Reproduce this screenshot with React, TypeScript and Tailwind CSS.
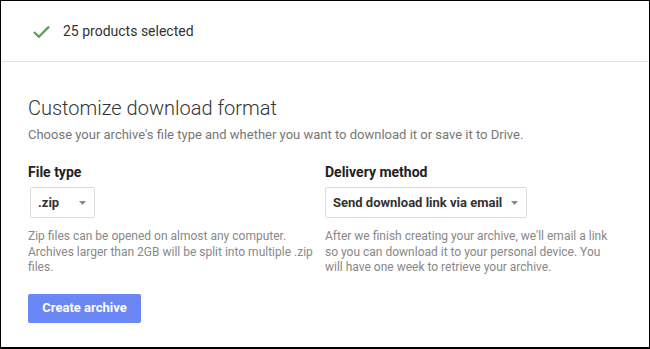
import React from "react";

function Caret() {
  return (
    <svg width="7" height="4" viewBox="0 0 7 4" className="shrink-0">
      <path d="M0 0 L7 0 L3.5 4 Z" fill="#888" />
    </svg>
  );
}

function SelectBox({ value, className }: { value: string; className: string }) {
  return (
    <div
      className={`flex h-[31px] items-center justify-between rounded-[2px] border border-[#dcdcdc] bg-white pl-[7px] pr-[8px] text-[13px] font-bold text-[#333] ${className}`}
    >
      <span>{value}</span>
      <Caret />
    </div>
  );
}

export default function App() {
  return (
    <div
      className="h-[349px] w-[650px] overflow-hidden border-t border-l border-r border-b-2 border-black bg-white"
      style={{ fontFamily: "Roboto, 'Liberation Sans', sans-serif" }}
    >
      {/* Selected header */}
      <div className="flex h-[61px] items-center gap-[13px] border-b border-[#e3e3e3] pl-[32px]">
        <svg width="17" height="13" viewBox="0 0 17 13">
          <path d="M1 7 L5.8 11.8 L16 1.6" fill="none" stroke="#5aa05a" strokeWidth="2.2" />
        </svg>
        <span className="text-[14px] text-[#333]">25 products selected</span>
      </div>

      {/* Format options */}
      <div className="pl-[27px] pt-[33px]">
        <h1 className="text-[20px] font-light leading-[26px] text-[#333]">Customize download format</h1>
        <p className="mt-[6px] text-[13px] leading-[16px] text-[#777]">
          Choose your archive's file type and whether you want to download it or save it to Drive.
        </p>

        <div className="mt-[20px] flex">
          <div className="w-[297px]">
            <div className="text-[14px] font-bold leading-[18px] text-[#222]">File type</div>
            <SelectBox value=".zip" className="ml-[2px] mt-[6px] w-[65px]" />
            <p className="mt-[11px] w-[290px] text-[12px] leading-[15.5px] text-[#888]">
              Zip files can be opened on almost any computer. Archives larger than 2GB will be split into multiple .zip files.
            </p>
          </div>
          <div className="w-[300px]">
            <div className="text-[14px] font-bold leading-[18px] text-[#222]">Delivery method</div>
            <SelectBox value="Send download link via email" className="mt-[6px] w-[202px]" />
            <p className="mt-[11px] w-[288px] text-[12px] leading-[15.5px] text-[#888]">
              After we finish creating your archive, we'll email a link so you can download it to your personal device. You will have one week to retrieve your archive.
            </p>
          </div>
        </div>

        <button className="mt-[18px] h-[29px] w-[113px] rounded-[2px] bg-[#6b86f5] text-[13px] font-bold text-white">
          Create archive
        </button>
      </div>
    </div>
  );
}
